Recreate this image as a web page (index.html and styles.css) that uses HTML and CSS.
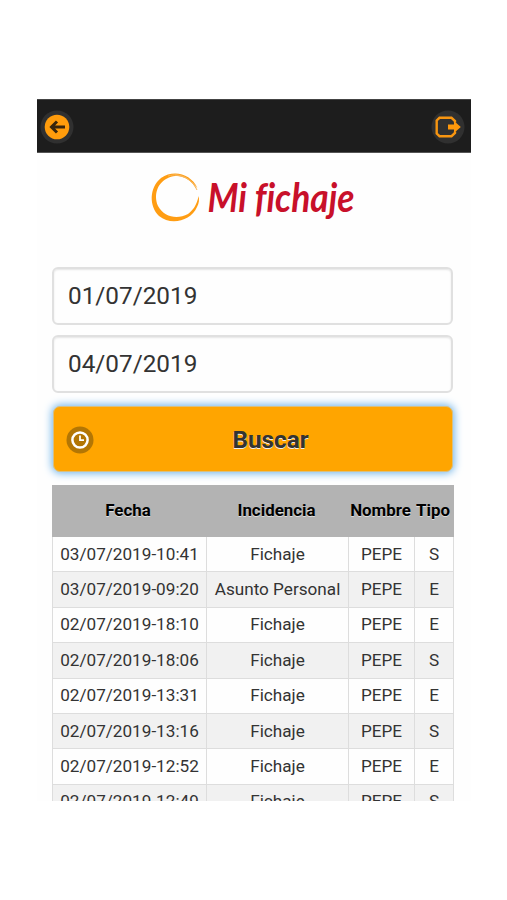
FILE: index.html
```html
<!DOCTYPE html>
<html lang="es">
<head>
    <meta charset="UTF-8">
    <title>Mi fichaje</title>
    <link rel="stylesheet" href="styles.css">
</head>
<body>
    <div class="page">
        <div class="header">
            <a class="nav-btn" aria-label="Volver">
                <svg width="34" height="34" viewBox="0 0 34 34">
                    <circle cx="17" cy="17" r="16.5" fill="#303030"/>
                    <circle cx="17" cy="17" r="12.3" fill="#ff9c0c"/>
                    <path d="M25 17H12M17 11.5L11.5 17L17 22.5" fill="none" stroke="#38250c" stroke-width="3"/>
                </svg>
            </a>
            <a class="nav-btn" aria-label="Salir">
                <svg width="34" height="34" viewBox="0 0 34 34">
                    <circle cx="17" cy="17" r="16.5" fill="#303030"/>
                    <path d="M24 12.500V11L20.500 7.800H8.500L5.700 10.500V23.500L8.500 26.200H20.500L24 23V21.500" fill="none" stroke="#f79510" stroke-width="2.400"/>
                    <path d="M17 14.500H23V11L29.800 17L23 23V19.500H17Z" fill="#ff980b"/>
                </svg>
            </a>
        </div>

        <div class="logo">
            <svg width="210" height="60" viewBox="0 0 210 60">
                <path d="M46.500 19C40 5 23 0 10 9C-2 19 -2 37 8 47C20 57 40 52 46 38C48 34 48.500 31 47.500 27C46 36 42 41 37 45C26 51 13 48 7 37C2 25 7 13 18 8.500C30 4 39 10 46.500 19Z" fill="#ff9d13"/>
                <path d="M17 7C30 3 40 10 45 19M24 6C34 7 42 12 46 21" fill="none" stroke="#f8b75c" stroke-width="1"/>
                <text class="logo-text" transform="translate(56.5 43) scale(1 1.12)" x="0" y="0" textLength="147" lengthAdjust="spacingAndGlyphs">Mi fichaje</text>
            </svg>
        </div>

        <div class="content">
            <input class="date" type="text" value="01/07/2019" aria-label="Desde">
            <input class="date" type="text" value="04/07/2019" aria-label="Hasta">
            <button class="search">
                <svg class="clock" width="28" height="28" viewBox="0 0 28 28">
                    <circle cx="14" cy="14" r="13.500" fill="#b37604"/>
                    <circle cx="14" cy="14" r="7.600" fill="none" stroke="#fff" stroke-width="2.500"/>
                    <path d="M14 9.500V14.200H18" fill="none" stroke="#fff" stroke-width="1.800"/>
                </svg>
                <span>Buscar</span>
            </button>

            <table>
                <colgroup>
                    <col class="c-fecha">
                    <col class="c-incidencia">
                    <col class="c-nombre">
                    <col class="c-tipo">
                </colgroup>
                <thead>
                    <tr><th>Fecha</th><th>Incidencia</th><th>Nombre</th><th>Tipo</th></tr>
                </thead>
                <tbody>
                    <tr><td>03/07/2019-10:41</td><td>Fichaje</td><td>PEPE</td><td>S</td></tr>
                    <tr><td>03/07/2019-09:20</td><td>Asunto Personal</td><td>PEPE</td><td>E</td></tr>
                    <tr><td>02/07/2019-18:10</td><td>Fichaje</td><td>PEPE</td><td>E</td></tr>
                    <tr><td>02/07/2019-18:06</td><td>Fichaje</td><td>PEPE</td><td>S</td></tr>
                    <tr><td>02/07/2019-13:31</td><td>Fichaje</td><td>PEPE</td><td>E</td></tr>
                    <tr><td>02/07/2019-13:16</td><td>Fichaje</td><td>PEPE</td><td>S</td></tr>
                    <tr><td>02/07/2019-12:52</td><td>Fichaje</td><td>PEPE</td><td>E</td></tr>
                    <tr><td>02/07/2019-12:49</td><td>Fichaje</td><td>PEPE</td><td>S</td></tr>
                </tbody>
            </table>
        </div>
    </div>
</body>
</html>
```
FILE: styles.css
```css
* {
    box-sizing: border-box;
}

body {
    margin: 0;
    background: #fff;
    color: #333;
    font-family: Roboto, sans-serif;
}

.page {
    width: 434px;
    height: 702px;
    margin: 99px 0 0 37px;
    overflow: hidden;
    background: #fefefe;
}

.header {
    display: flex;
    justify-content: space-between;
    height: 54px;
    padding: 10px 6px 0 3px;
    background: #1d1d1d;
    border-top: 1px solid #444;
    border-bottom: 1px solid #555;
}

.nav-btn {
    height: 34px;
}

.logo {
    height: 60px;
    margin: 16px 0 38px 114px;
}

.logo svg {
    display: block;
    overflow: visible;
}

/* brand lettering */
.logo-text {
    font-family: Lato, sans-serif;
    font-size: 36px;
    font-weight: 700;
    font-style: italic;
    font-variant-ligatures: none;
    fill: #c8102a;
}

.content {
    padding: 0 18px 0 15px;
}

.date {
    display: block;
    width: 401px;
    height: 58px;
    margin-bottom: 10px;
    padding: 0 14px 1px;
    border: 2px solid #e0e0e0;
    border-radius: 6px;
    background: #fefefe;
    box-shadow: inset 0 1px 2px rgba(0, 0, 0, 0.1);
    color: #333;
    font-family: inherit;
    font-size: 24.3px;
    outline: none;
}

.search {
    display: flex;
    align-items: center;
    width: 400px;
    height: 66px;
    margin: 13px 0 13px 1px;
    padding: 0;
    border: 1px solid #d9bf80;
    border-radius: 7px;
    background: #ffa500;
    box-shadow: 0 0 9px 1px #68b0e8;
    color: #333;
    font-family: inherit;
    font-size: 24.3px;
    font-weight: 700;
    text-shadow: 0 1px 0 #eee;
}

.search span {
    flex: 1;
    padding-right: 5px;
    text-align: center;
}

.clock {
    flex: none;
    margin: 1px 0 0 12px;
}

table {
    width: 402px;
    table-layout: fixed;
    border-collapse: separate;
    border-spacing: 0;
    font-size: 17.15px;
    text-align: center;
    white-space: nowrap;
}

.c-fecha {
    width: 155px;
}

.c-incidencia {
    width: 142px;
}

.c-nombre {
    width: 66px;
}

.c-tipo {
    width: 39px;
}

th {
    height: 52px;
    padding: 0 3px 3px 0;
    background: #b3b3b3;
    color: #000;
    font-size: 16.9px;
    font-weight: 700;
    text-shadow: 0 1px 0 #ddd;
}

td {
    height: 35.4px;
    padding: 0 0 1px;
    border-right: 1px solid #ddd;
    border-bottom: 1px solid #ddd;
    line-height: 20px;
}

td:first-child {
    border-left: 1px solid #ddd;
}

tbody tr:nth-child(even) {
    background: #f1f1f1;
}
```
